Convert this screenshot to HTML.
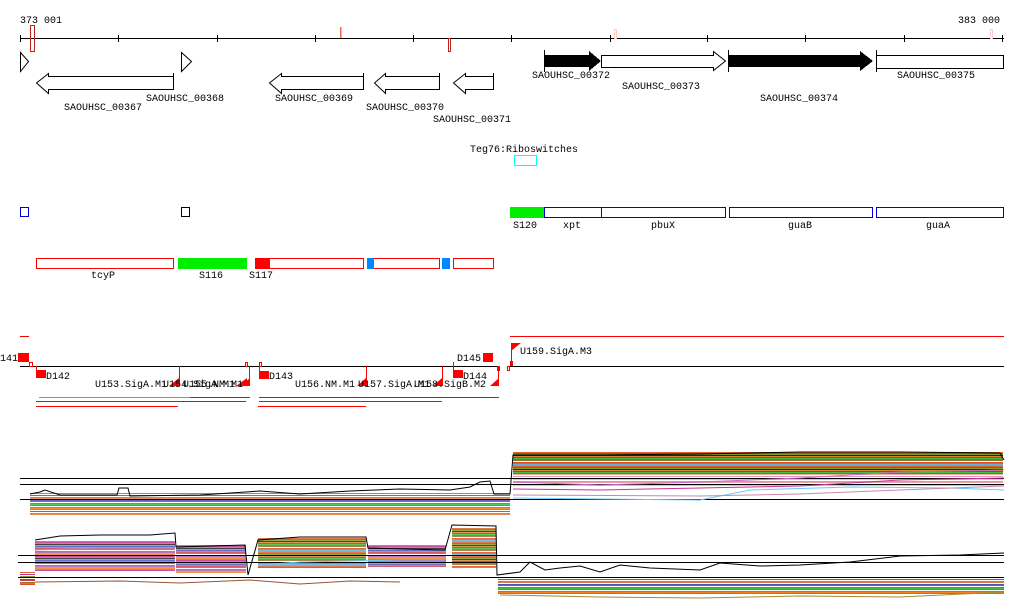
<!DOCTYPE html>
<html><head><meta charset="utf-8"><style>
html,body{margin:0;padding:0;background:#fff;width:1024px;height:611px;overflow:hidden}
svg{position:absolute;left:0;top:0}
text{font-family:"Liberation Mono",monospace;font-size:10px;fill:#000}
.b{position:absolute}
.s1{background:repeating-linear-gradient(180deg,#e06030 0 1px,#fff 1px 2px,#c03090 2px 3px,#fff 3px 4px,#80a020 4px 5px,#e08040 5px 6px,#fff 6px 7px,#5050c0 7px 8px,#d04050 8px 9px,#fff 9px 10px,#a07030 10px 11px,#40c040 11px 12px,#e05020 12px 13px,#fff 13px 14px,#b060b0 14px 15px,#f08020 15px 16px)}
.s2{background:repeating-linear-gradient(180deg,#e06030 0 1px,#c03090 1px 2px,#80a020 2px 3px,#222 3px 4px,#e08040 4px 5px,#5050c0 5px 6px,#40c040 6px 7px,#d04050 7px 8px,#a07030 8px 9px,#fff 9px 10px,#e05020 10px 11px,#b060b0 11px 12px,#60b0e0 12px 13px,#f08020 13px 14px)}
</style></head><body>
<div class="b s1" style="left:30px;top:493px;width:480px;height:22px;opacity:.9"></div>
<div class="b s2" style="left:513px;top:452px;width:490px;height:22px"></div>
<div class="b s1" style="left:513px;top:474px;width:490px;height:12px;opacity:.5"></div>
<div class="b s2" style="left:35px;top:541px;width:140px;height:30px;opacity:.85"></div>
<div class="b s2" style="left:176px;top:545px;width:70px;height:28px;opacity:.85"></div>
<div class="b s2" style="left:258px;top:538px;width:108px;height:30px;opacity:.85"></div>
<div class="b s2" style="left:368px;top:545px;width:78px;height:22px;opacity:.85"></div>
<div class="b s2" style="left:452px;top:528px;width:44px;height:40px;opacity:.85"></div>
<div class="b s1" style="left:498px;top:577px;width:506px;height:18px"></div>
<div class="b s1" style="left:20px;top:572px;width:15px;height:14px"></div>
<svg width="1024" height="611" viewBox="0 0 1024 611" shape-rendering="crispEdges">
<text x="20" y="23">373 001</text>
<text x="958" y="23">383 000</text>
<line x1="20" y1="38.5" x2="1004" y2="38.5" stroke="#000"/>
<g stroke="#000">
<line x1="20.5" y1="35" x2="20.5" y2="42"/><line x1="118.5" y1="35" x2="118.5" y2="42"/><line x1="217.5" y1="35" x2="217.5" y2="42"/><line x1="315.5" y1="35" x2="315.5" y2="42"/><line x1="413.5" y1="35" x2="413.5" y2="42"/><line x1="511.5" y1="35" x2="511.5" y2="42"/><line x1="610.5" y1="35" x2="610.5" y2="42"/><line x1="707.5" y1="35" x2="707.5" y2="42"/><line x1="805.5" y1="35" x2="805.5" y2="42"/><line x1="904.5" y1="35" x2="904.5" y2="42"/><line x1="1002.5" y1="35" x2="1002.5" y2="42"/>
</g>
<rect x="30.5" y="25.5" width="4" height="26" fill="none" stroke="#b22"/>
<rect x="340" y="27" width="1.5" height="11" fill="#e64"/>
<rect x="448.5" y="38.5" width="2" height="13" fill="none" stroke="#b22"/>
<rect x="614.5" y="29.5" width="2" height="9" fill="none" stroke="#fcc"/>
<rect x="990.5" y="29.5" width="2" height="9" fill="none" stroke="#fcc"/>
<g fill="#fff" stroke="#000" shape-rendering="auto">
<path d="M20.5 52.5 L28.5 61.5 L20.5 71.5 Z"/>
<path d="M181.5 52.5 L191.5 61.5 L181.5 71.5 Z"/>
<path d="M173.5 76.5 H48.5 V73.5 L36.5 83 L48.5 93.5 V89.5 H173.5"/><line x1="173.5" y1="73" x2="173.5" y2="90"/>
<path d="M363.5 76.5 H281.5 V73.5 L269.5 83 L281.5 93.5 V89.5 H363.5"/><line x1="363.5" y1="73" x2="363.5" y2="90"/>
<path d="M439.5 76.5 H385.5 V73.5 L374.5 83 L385.5 93.5 V89.5 H439.5"/><line x1="439.5" y1="73" x2="439.5" y2="90"/>
<path d="M493.5 76.5 H465.5 V73.5 L453.5 83 L465.5 93.5 V89.5 H493.5"/><line x1="493.5" y1="73" x2="493.5" y2="90"/>
<path d="M601.5 55.5 H713.5 V51.5 L725.5 61 L713.5 70.5 V67.5 H601.5 Z"/>
<rect x="876.5" y="55.5" width="127" height="13"/>
<line x1="876.5" y1="50" x2="876.5" y2="72"/>
</g>
<path d="M544 55 H589 V51 L601 61 L589 71 V67 H544 Z" fill="#000"/>
<line x1="544.5" y1="50" x2="544.5" y2="72" stroke="#000"/>
<path d="M729 55 H860 V51 L873 61 L860 71 V67 H729 Z" fill="#000"/>
<line x1="728.5" y1="50" x2="728.5" y2="72" stroke="#000"/>
<text x="64" y="110">SAOUHSC_00367</text>
<text x="146" y="101">SAOUHSC_00368</text>
<text x="275" y="101">SAOUHSC_00369</text>
<text x="366" y="110">SAOUHSC_00370</text>
<text x="433" y="122">SAOUHSC_00371</text>
<text x="532" y="78">SAOUHSC_00372</text>
<text x="622" y="89">SAOUHSC_00373</text>
<text x="760" y="101">SAOUHSC_00374</text>
<text x="897" y="78">SAOUHSC_00375</text>
<text x="470" y="152">Teg76:Riboswitches</text>
<rect x="514.5" y="155.5" width="22" height="10" fill="none" stroke="#0ff"/>
<rect x="20.5" y="207.5" width="8" height="9" fill="none" stroke="#00d"/>
<rect x="181.5" y="207.5" width="8" height="9" fill="none" stroke="#000"/>
<rect x="510" y="207" width="34" height="11" fill="#0e0"/>
<g fill="none" stroke="#00d"><rect x="544.5" y="207.5" width="57" height="10"/><rect x="601.5" y="207.5" width="124" height="10"/><rect x="729.5" y="207.5" width="143" height="10"/><rect x="876.5" y="207.5" width="127" height="10"/></g>
<text x="513" y="228">S120</text><text x="563" y="228">xpt</text><text x="651" y="228">pbuX</text><text x="788" y="228">guaB</text><text x="926" y="228">guaA</text>
<g fill="none" stroke="#f00"><rect x="36.5" y="258.5" width="137" height="10"/><rect x="255.5" y="258.5" width="108" height="10"/><rect x="373.5" y="258.5" width="66" height="10"/><rect x="453.5" y="258.5" width="40" height="10"/></g>
<rect x="178" y="258" width="69" height="11" fill="#0e0"/>
<rect x="255" y="258" width="15" height="11" fill="#f00"/>
<rect x="367" y="258" width="7" height="11" fill="#08f"/>
<rect x="442" y="258" width="8" height="11" fill="#08f"/>
<text x="91" y="278">tcyP</text><text x="199" y="278">S116</text><text x="249" y="278">S117</text>
<line x1="20" y1="336.5" x2="29" y2="336.5" stroke="#f00"/>
<line x1="510" y1="336.5" x2="1004" y2="336.5" stroke="#f00"/>
<line x1="20" y1="366.5" x2="500" y2="366.5" stroke="#000"/>
<line x1="510" y1="366.5" x2="1004" y2="366.5" stroke="#000"/>
<text x="0" y="361">141</text>
<rect x="18" y="353" width="11" height="9" fill="#f00"/>
<rect x="29.5" y="362.5" width="3" height="4" fill="none" stroke="#f00"/>
<line x1="36.5" y1="366" x2="36.5" y2="372" stroke="#f00"/>
<rect x="36" y="370" width="10" height="8" fill="#f00"/><text x="46" y="379">D142</text>
<rect x="259" y="371" width="10" height="8" fill="#f00"/><text x="269" y="379">D143</text>
<text x="457" y="361">D145</text><rect x="483" y="353" width="10" height="9" fill="#f00"/>
<rect x="453" y="370" width="10" height="8" fill="#f00"/><text x="463" y="379">D144</text>
<g stroke="#f00">
<line x1="179.5" y1="366" x2="179.5" y2="386"/><line x1="249.5" y1="366" x2="249.5" y2="386"/><line x1="366.5" y1="366" x2="366.5" y2="386"/><line x1="442.5" y1="366" x2="442.5" y2="386"/><line x1="498.5" y1="366" x2="498.5" y2="386"/><line x1="511.5" y1="343" x2="511.5" y2="366"/><line x1="259.5" y1="362" x2="259.5" y2="372"/><line x1="453.5" y1="362" x2="453.5" y2="372"/>
</g>
<g fill="#f00" shape-rendering="auto">
<path d="M169 386 L179 378 V386Z"/><path d="M236 386 L247 378 V386Z"/><path d="M240 386 L250 378 V386Z"/><path d="M357 386 L366 378 V386Z"/><path d="M433 386 L442 378 V386Z"/><path d="M490 386 L499 378 V386Z"/><path d="M511 343 H521 L511 351Z"/>
<rect x="510" y="361" width="3" height="5"/>
</g>
<g fill="none" stroke="#f00"><rect x="245.5" y="362.5" width="2" height="4"/><rect x="259.5" y="362.5" width="2" height="4"/><rect x="497.5" y="366.5" width="2" height="4"/><rect x="507.5" y="366.5" width="2" height="4"/></g>
<text x="520" y="354">U159.SigA.M3</text>
<text x="95" y="387">U153.SigA.M1</text><text x="163" y="387">U154.SigA.M1</text><text x="183" y="387">U155.NM.M1</text>
<text x="295" y="387">U156.NM.M1</text><text x="358" y="387">U157.SigA.M1</text><text x="414" y="387">U158.SigB.M2</text>
<line x1="39" y1="397.5" x2="190" y2="397.5" stroke="#2d2"/>
<g stroke="#f00"><line x1="190" y1="397.5" x2="250" y2="397.5"/><line x1="36" y1="401.5" x2="246" y2="401.5"/><line x1="36" y1="406.5" x2="178" y2="406.5"/><line x1="259" y1="397.5" x2="499" y2="397.5"/><line x1="259" y1="401.5" x2="442" y2="401.5"/><line x1="258" y1="406.5" x2="366" y2="406.5"/></g>
<g stroke="#000" fill="none">
<line x1="20" y1="478.5" x2="1004" y2="478.5"/><line x1="20" y1="484.5" x2="1004" y2="484.5"/><line x1="20" y1="499.5" x2="1004" y2="499.5"/>
<line x1="18" y1="555.5" x2="1004" y2="555.5"/><line x1="18" y1="562.5" x2="1004" y2="562.5"/><line x1="18" y1="577.5" x2="1004" y2="577.5"/>
</g>
<g fill="none" shape-rendering="auto">
<polyline stroke="#000" points="30,494 40,492 45,490 60,495 117,495 119,488 128,488 130,496 200,495 260,491 300,494 350,491 400,489 450,490 470,487 480,482 490,481 494,494 510,494 513,455 600,455 700,454 800,452 900,452 1000,453 1004,460"/>
<polyline stroke="#000" points="35,540 60,536 100,535 150,535 175,533 176,547 245,545 248,575 258,540 300,537 366,537 368,548 445,550 452,525 496,526 497,575 520,572 530,562 545,570 560,568 580,566 600,572 620,565 650,568 700,570 720,563 760,566 800,565 850,562 900,556 960,555 1004,553"/>
<polyline stroke="#6cf" points="513,498 600,499 700,500 750,490 850,487 950,488 1004,490"/>
<polyline stroke="#c6c" points="513,482 600,485 700,482 800,478 900,472 1004,470"/>
<polyline stroke="#c39" points="513,489 600,490 700,488 800,486 900,480 1004,478"/>
<polyline stroke="#c8a" points="513,495 700,496 800,494 900,490 1004,486"/>
<polyline stroke="#953" points="35,582 120,581 180,583 250,580 300,584 350,581 400,582"/>
<polyline stroke="#b8b" points="35,550 100,548 175,548"/>
<polyline stroke="#a83" points="500,595 600,597 700,598 800,596 900,597 1004,592"/>
<polyline stroke="#6cf" points="258,565 300,562 400,560 445,560"/>
</g>
</svg>
</body></html>
